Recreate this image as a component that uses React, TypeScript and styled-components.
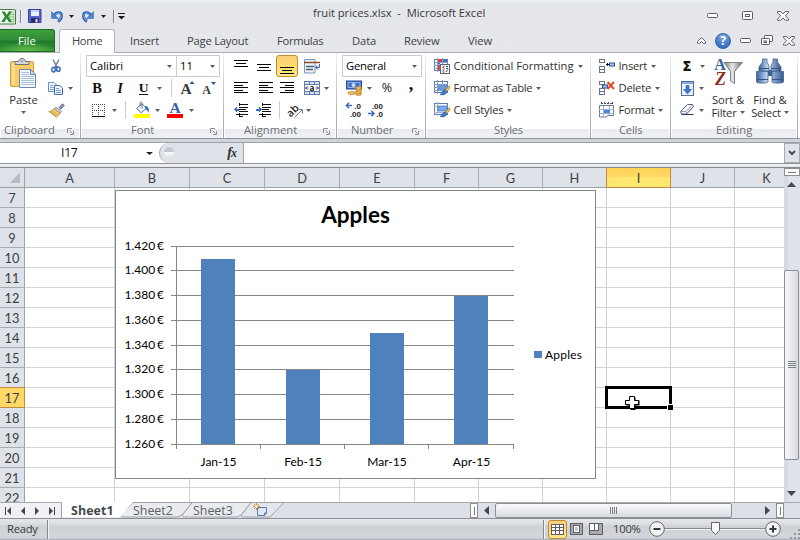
import React from "react";
import styled, { createGlobalStyle, css } from "styled-components";

const UI = `"Open Sans", "Noto Sans", sans-serif`;
const CALIBRI = `Lato, "Open Sans", sans-serif`;

const Global = createGlobalStyle`
  * { box-sizing: border-box; }
  html, body { margin: 0; padding: 0; overflow: hidden; }
  body { font-family: ${UI}; font-size: 11.2px; line-height: 14px; color: #303030; }
  svg { display: block; flex: none; overflow: visible; }
`;

const Window = styled.div`
  width: 800px;
  height: 540px;
  display: flex;
  flex-direction: column;
  background: #e3e5ea;
  overflow: hidden;
`;

const Text = styled.span<{ $ls?: number }>`
  white-space: pre;
  letter-spacing: ${(p) => p.$ls ?? 0}px;
`;

/* ---------- Title bar ---------- */
const TitleBar = styled.div`
  height: 29px;
  flex: none;
  display: grid;
  grid-template-columns: 130px 1fr 100px;
  background: linear-gradient(#e9ecf1 0, #e9ecf1 3px, #e4e6eb 3px, #e4e6eb 100%);
`;
const QuickAccess = styled.div`
  display: flex;
  padding-top: 5px;
`;
const Caption = styled.div`
  padding: 6px 0 0 183px;
  color: #38393c;
`;
const WindowButtons = styled.div`
  display: flex;
  align-items: center;
  padding: 3px 0 0 4px;
`;

/* ---------- Tab strip ---------- */
const TabStrip = styled.div`
  height: 24px;
  flex: none;
  display: flex;
  background: linear-gradient(#e4e6eb, #e6e8ec);
  box-shadow: inset 0 -1px 0 #a9adb5;
`;
const FileTab = styled.div`
  width: 55px;
  height: 23px;
  border: 1px solid #1d6a22;
  border-left: none;
  border-radius: 0 3px 0 0;
  background: radial-gradient(ellipse 28px 9px at 50% 100%, #64bb4c, transparent),
    linear-gradient(#3f9f3c 0, #2f8c34 48%, #1f7a2b 52%, #369836 100%);
  color: #fff;
  padding: 4px 0 0 18px;
  margin-right: 4px;
`;
const Tab = styled.div<{ $w: number; $pl: number; $active?: boolean }>`
  width: ${(p) => p.$w}px;
  padding: 5px 0 0 ${(p) => p.$pl}px;
  color: #404247;
  ${(p) =>
    p.$active &&
    css`
      padding-left: ${p.$pl - 1}px;
      padding-top: 4px;
      background: #fff;
      border: 1px solid #b3b6bd;
      border-bottom: none;
      border-radius: 3px 3px 0 0;
    `}
`;
const DocButtons = styled.div`
  display: flex;
  align-items: center;
  margin-left: auto;
  width: 108px;
  padding-bottom: 1px;
`;

/* ---------- Ribbon ---------- */
const Ribbon = styled.div`
  height: 90px;
  flex: none;
  display: flex;
  background: linear-gradient(#fff 0, #fff 85px, #85878d 85px, #9a9ea5 86px, #d0d3d9 86px, #d0d3d9 89px, #9ea1a8 89px);
  padding-bottom: 5px;
`;
const Group = styled.div<{ $w: number }>`
  width: ${(p) => p.$w}px;
  height: 85px;
  flex: none;
  padding-right: 1px;
  background: linear-gradient(#f4f5f7, #cfd2d8 30%, #a0a4ac) right / 1px 100% no-repeat;
  display: flex;
  flex-direction: column;
`;
const GroupBody = styled.div`
  height: 69px;
  padding-top: 2px;
  display: flex;
`;
const GroupLabel = styled.div<{ $pl: number }>`
  height: 16px;
  margin-right: 1px;
  margin-left: 1px;
  padding: 1px 0 0 ${(p) => p.$pl - 1}px;
  color: #6c6e73;
  display: flex;
  align-items: flex-start;
  justify-content: space-between;
  background: linear-gradient(#fff 7px, #e9ebf0 7px, #eff1f4 100%);
`;
const Launcher = styled.span`
  display: block;
  padding: 5px 5px 0 0;
`;
const Stack = styled.div<{ $pl: number }>`
  display: flex;
  flex-direction: column;
  padding-left: ${(p) => p.$pl}px;
`;
const Row = styled.div`
  height: 22px;
  display: flex;
  align-items: center;
`;
const Slot = styled.div<{ $w: number; $active?: boolean }>`
  width: ${(p) => p.$w}px;
  height: 22px;
  display: flex;
  align-items: center;
  justify-content: center;
  ${(p) =>
    p.$active &&
    css`
      border: 1px solid #c28a30;
      border-radius: 3px;
      background: linear-gradient(#fbd07a, #fddc6b 50%, #ffe88b);
    `}
`;
const Divider = styled.div<{ $w: number }>`
  width: ${(p) => p.$w}px;
  height: 18px;
  background: linear-gradient(#c9ccd2, #c9ccd2) center / 1px 100% no-repeat;
`;
const Combo = styled.div<{ $w: number }>`
  width: ${(p) => p.$w}px;
  height: 22px;
  border: 1px solid #c9ccd3;
  background: #fff;
  color: #000;
  display: flex;
  align-items: center;
  justify-content: space-between;
  padding: 0 4px 0 3px;
  & + & { border-left: none; }
`;
const Command = styled.div`
  height: 22px;
  display: flex;
  align-items: center;
  gap: 4px;
`;
const CommandText = styled(Text)`
  margin-left: -0.5px;
`;
const BigButton = styled.div<{ $w: number }>`
  width: ${(p) => p.$w}px;
  display: flex;
  flex-direction: column;
  align-items: center;
  padding-top: 3px;
`;
const BigIcon = styled.div`
  height: 35px;
`;
const BigLine = styled.div`
  height: 13px;
  display: flex;
  align-items: center;
  gap: 3px;
`;
const Glyph = styled.span<{ $size: number; $italic?: boolean; $underline?: boolean }>`
  font: ${(p) => (p.$italic ? "italic" : "normal")} bold ${(p) => p.$size}px / 16px "Liberation Serif", serif;
  color: #111;
  ${(p) => p.$underline && "border-bottom: 1px solid #111; line-height: 12px;"}
`;
const Percent = styled.span`
  font: 12.5px / 16px ${UI};
  color: #222;
`;
const Comma = styled(Glyph)`
  padding-bottom: 9px;
`;
const Sigma = styled.span`
  font: 800 13.5px / 16px ${UI};
  color: #111;
`;

const Arrow = ({ w = 5, c = "#5c5f66" }: { w?: number; c?: string }) => (
  <svg width={w} height={3} viewBox="0 0 6 3" preserveAspectRatio="none">
    <path d="M0 0h6L3 3z" fill={c} />
  </svg>
);

const LaunchIcon = () => (
  <svg width="7" height="7" viewBox="0 0 7 7" fill="none" stroke="#8d9097">
    <path d="M.5 5V.5H5M2.5 2.5l3 3M6.500 3v3.500H3" />
  </svg>
);

/* ---------- Quick access icons ---------- */
const ExcelIcon = () => (
  <svg width="16" height="17" viewBox="0 0 16 17">
    <path d="M0 1h11l4.500 1v14H0z" fill="#f4faf2" />
    <path d="M0 1.500h12.500l3 .5v14H0" fill="none" stroke="#3f7f3e" />
    <path d="M9.500 4h4.500v10H9.500z" fill="#d8ecd0" stroke="#76a86d" strokeWidth=".6" />
    <path d="M9.500 6.500h4.500M9.500 9h4.500M9.500 11.500h4.500" stroke="#76a86d" strokeWidth=".6" />
    <path d="M1.500 3.500h3.200l2 3.400 2-3.400h3.200L8.400 8.500l3.600 5.400H8.700L6.600 10.300l-2.200 3.600H1.200L4.900 8.500z" fill="#2c8a34" />
  </svg>
);
const SaveIcon = () => (
  <svg width="14" height="14" viewBox="0 0 14 14">
    <path d="M.5.5h12.500v13H.5z" fill="#5a66d0" stroke="#3840a0" />
    <path d="M3 1h8v6H3z" fill="#eaf3fb" />
    <path d="M3 1h8v2H3z" fill="#bcd6ef" />
    <path d="M3 9h8v4.500H3z" fill="#262b62" />
    <path d="M7.500 10h2v3.500h-2z" fill="#dfe5f5" />
  </svg>
);
const UndoIcon = ({ flip }: { flip?: boolean }) => (
  <svg width="13" height="13" viewBox="0 0 13 13">
    <g transform={flip ? "translate(13 0) scale(-1 1)" : undefined}>
      <path d="M3.500 5.500C5 2 10.300 1.500 10.500 5.500c.1 2.500-1.200 4.500-3.500 6" fill="none" stroke="#2f62b5" strokeWidth="2.800" />
      <path d="M4.500 4.800c1.700-2.500 5.400-2.300 5.600.7.1 2-1 4-2.800 5.500" fill="none" stroke="#8db6ec" strokeWidth="1" />
      <path d="M.500 1.500v7h7z" fill="#4a82d2" stroke="#2f62b5" strokeWidth=".5" />
    </g>
  </svg>
);
const CustomizeIcon = () => (
  <svg width="7" height="7" viewBox="0 0 7 7">
    <path d="M0 .5h7" stroke="#1e1e1e" />
    <path d="M0 3h7L3.500 6.500z" fill="#1e1e1e" />
  </svg>
);
const QSep = () => (
  <svg width="2" height="13" viewBox="0 0 2 13">
    <path d="M.5 0v13" stroke="#7d8087" />
    <path d="M1.500 0v13" stroke="#f4f5f8" />
  </svg>
);

/* ---------- Window buttons ---------- */
const MinIcon = () => (
  <svg width="11" height="6" viewBox="0 0 11 6">
    <rect x=".5" y=".5" width="10" height="4" rx="1" fill="#fff" stroke="#5a5e6b" />
  </svg>
);
const MaxIcon = () => (
  <svg width="11" height="10" viewBox="0 0 11 10">
    <rect x=".5" y=".5" width="10" height="8" rx="1" fill="#fff" stroke="#5a5e6b" />
    <rect x="3.500" y="3.500" width="4" height="2" fill="#fff" stroke="#5a5e6b" />
  </svg>
);
const RestoreIcon = () => (
  <svg width="12" height="11" viewBox="0 0 12 11" fill="#fff" stroke="#5a5e6b">
    <rect x="3.500" y=".5" width="8" height="6" rx=".6" />
    <rect x=".5" y="3.500" width="8" height="6" rx=".6" />
    <rect x="3" y="6" width="2.500" height="1.500" />
  </svg>
);
const CloseIcon = () => (
  <svg width="12" height="10" viewBox="0 0 12 10">
    <path d="M.5.5h3.300L6 2.900 8.200.5h3.300v1.300L8.300 4.800l3.200 3.100v1.300H8.200L6 6.800 3.800 9.200H.5V7.900l3.200-3.100L.5 1.800z" fill="#fff" stroke="#5a5e6b" />
  </svg>
);
const CollapseIcon = () => (
  <svg width="9" height="7" viewBox="0 0 9 7">
    <path d="M4.500.7L8.500 4.500v1.800H6.300L4.500 4.600 2.700 6.300H.5V4.500z" fill="#fff" stroke="#5a5e6b" />
  </svg>
);
const Help = styled.div`
  width: 16px;
  height: 16px;
  border-radius: 50%;
  border: 1px solid #2f5fa8;
  background: radial-gradient(circle at 50% 20%, #7fa9e2, #3a6fc0 75%);
  color: #fff;
  font: bold 12px / 14px "Open Sans", sans-serif;
  text-align: center;
`;

/* ---------- Ribbon icons ---------- */
const PasteIcon = () => (
  <svg width="27" height="31" viewBox="0 0 27 31">
    <rect x=".5" y="3.500" width="23" height="25" rx="1.500" fill="#f6cc63" stroke="#d29c3c" />
    <path d="M2 5h3v22H2z" fill="#fbdc8b" />
    <path d="M5 3.500h3.500C9 1 10.500.5 12 .5s3 .5 3.500 3H19v3H5z" fill="#d5d7da" stroke="#6f7277" />
    <circle cx="12" cy="3" r="1" fill="#fff" stroke="#6f7277" strokeWidth=".6" />
    <path d="M9.500 11.500h11l5 5v13h-16z" fill="#f5f9ff" stroke="#6c87b5" />
    <path d="M20.500 11.500v5h5z" fill="#cddcf1" stroke="#6c87b5" />
    <path d="M11 14.500h8M11 16.500h8M11 18.500h13M11 20.500h13M11 22.500h13M11 24.500h13M11 26.500h13" stroke="#a9c0e2" />
  </svg>
);
const CutIcon = () => (
  <svg width="10" height="14" viewBox="0 0 10 14" fill="none">
    <path d="M2 .5L6 8M8 .5L4 8" stroke="#6f7f99" strokeWidth="1.500" />
    <ellipse cx="2.500" cy="10.800" rx="1.700" ry="2.200" stroke="#3b67b3" strokeWidth="1.500" />
    <ellipse cx="7.300" cy="10.300" rx="1.700" ry="2.200" stroke="#3b67b3" strokeWidth="1.500" />
    <path d="M3.500 8.200h3" stroke="#3b67b3" strokeWidth="1.500" />
  </svg>
);
const CopyIcon = () => (
  <svg width="15" height="13" viewBox="0 0 15 13">
    <path d="M.5.5h5.500l2.500 2.500v6.500H.5z" fill="#eef5ff" stroke="#6b8cc4" />
    <path d="M2 3.500h3M2 5.500h4M2 7.500h4" stroke="#84a6db" />
    <path d="M6.500 3.500h5l3 2.500v6.500h-8z" fill="#eef5ff" stroke="#4669aa" />
    <path d="M8 6.500h3M8 8.500h5M8 10.500h5" stroke="#6f97d5" />
  </svg>
);
const BrushIcon = () => (
  <svg width="17" height="15" viewBox="0 0 17 15">
    <path d="M11 4.500L14.500.8l1.800 1.500-3.500 4z" fill="#8f96b5" stroke="#565d80" strokeWidth=".8" />
    <path d="M8 4l5.500 4.500-1.800 2.200L6 6z" fill="#c4c8d6" stroke="#6f7590" strokeWidth=".7" />
    <path d="M6 5.500l6 5-3.500 3.800L.7 8.500c2 0 4-1 5.300-3z" fill="#f6cf6c" stroke="#b98a37" strokeWidth=".8" />
    <path d="M4 8l5.500 4M3 9l5 4" stroke="#c4903a" strokeWidth=".7" />
  </svg>
);
const BordersIcon = () => (
  <svg width="13" height="13" viewBox="0 0 13 13">
    <path d="M.5 0v12M6.500 0v12M12.500 0v12M0 .5h13M0 6.500h13" stroke="#4a4a4a" strokeDasharray="1 1" fill="none" />
    <path d="M0 12.500h13" stroke="#111" />
  </svg>
);
const FillIcon = () => (
  <svg width="16" height="16" viewBox="0 0 16 16">
    <path d="M0 12h16v4H0z" fill="#ffff00" />
    <path d="M2.500 6.500L8 1.800l4.500 4.400-5.300 4.600z" fill="#eef2f8" stroke="#5b6f92" />
    <path d="M8 6.500V1c0-1.200-2-1.200-2 0v3" fill="none" stroke="#5b6f92" strokeWidth=".9" />
    <path d="M11 4c3 0 4.500 2 3.600 7-1-2.500-1.600-3.200-3-3.600z" fill="#3a6cc0" />
  </svg>
);
const FontColorIcon = () => (
  <svg width="16" height="16" viewBox="0 0 16 16">
    <path d="M0 12h16v4H0z" fill="#ff0000" />
    <text x="8" y="10.800" textAnchor="middle" fontFamily="Liberation Serif, serif" fontWeight="700" fontSize="15.500" fill="#365fa5">A</text>
  </svg>
);
const GrowIcon = ({ down }: { down?: boolean }) => (
  <svg width="16" height="16" viewBox="0 0 16 16">
    <text x={down ? 4.5 : 6} y="14" textAnchor="middle" fontFamily="Liberation Serif, serif" fontWeight="700" fontSize={down ? 12 : 15.5} fill="#3b3b3b">A</text>
    <path d={down ? "M9 2h5l-2.500 3z" : "M9.500 4h5L12 1z"} fill="#2c57a5" />
  </svg>
);
const Lines = ({ kind }: { kind: "top" | "mid" | "bot" | "left" | "center" | "right" }) => {
  const three = kind === "top" || kind === "mid" || kind === "bot";
  const y0 = kind === "mid" ? 4 : kind === "bot" ? 7 : 0;
  const rows = three
    ? [[0, 14, y0], [2, 10, y0 + 3], [0, 14, y0 + 6]]
    : [0, 1, 2, 3, 4].map((i) => {
        const w = i % 2 ? 9 : 14;
        return [kind === "left" ? 0 : kind === "right" ? 14 - w : 2.5, w, i * 2.5];
      });
  return (
    <svg width="14" height="14" viewBox="0 0 14 14" shapeRendering="crispEdges">
      {rows.map(([x, w, y], i) => (
        <rect key={i} x={Math.floor(x)} y={Math.round(y) + 1} width={w} height="1" fill="#000" />
      ))}
    </svg>
  );
};
const IndentIcon = ({ out }: { out?: boolean }) => (
  <svg width="16" height="14" viewBox="0 0 16 14" shapeRendering="crispEdges">
    <path d="M6 1.500h9M7 4.500h8M7 6.500h6M7 8.500h8M3 11.500h12M6 13.500h4" stroke="#111" />
    <path d="M6.500 0v14" stroke="#111" strokeDasharray="1 1" />
    <path d={out ? "M4 3L.5 6.500 4 10V7.500h2v-2H4z" : "M2.500 3L6 6.500 2.500 10V7.500H0v-2h2.500z"} fill="#3a6cc8" />
  </svg>
);
const WrapIcon = () => (
  <svg width="17" height="15" viewBox="0 0 17 15">
    <path d="M.5.5h10.500v13.500H.5z" fill="#eaf0f8" stroke="#7f97bb" />
    <path d="M0 3.500h16" stroke="#8a4b1f" strokeWidth="1.400" />
    <path d="M2 7.500h8M2 10.500h7" stroke="#555f70" strokeWidth="1.400" />
    <path d="M15.500 5v3.500H13" stroke="#3a6cb8" fill="none" />
    <path d="M13.500 6v5L11 8.500z" fill="#3a6cb8" />
  </svg>
);
const MergeIcon = () => (
  <svg width="16" height="14" viewBox="0 0 16 14">
    <rect x=".5" y=".5" width="15" height="13" fill="#d5e1f3" stroke="#5f7ba6" />
    <path d="M5.500 0v3M10.500 0v3M5.500 11v3M10.500 11v3M0 3.500h16M0 10.500h16" stroke="#5f7ba6" />
    <rect x="1" y="4" width="14" height="6" fill="#fff" />
    <text x="8" y="9.500" textAnchor="middle" fontFamily="Open Sans, sans-serif" fontWeight="700" fontSize="8" fill="#111">a</text>
    <path d="M1.500 7h3M3.500 5.500L1.500 7l2 1.500M14.500 7h-3M12.500 5.500L14.500 7l-2 1.500" stroke="#2f4f87" fill="none" strokeWidth=".9" />
  </svg>
);
const OrientIcon = () => (
  <svg width="17" height="15" viewBox="0 0 17 15">
    <text x="0" y="12" transform="rotate(-45 5 9)" fontFamily="Open Sans, sans-serif" fontSize="10.500" fontWeight="600" fill="#1d1d1d">ab</text>
    <path d="M7.500 14.500L15 7M11.500 6.500H15.500v4" stroke="#7b828f" fill="none" />
  </svg>
);
const CurrencyIcon = () => (
  <svg width="17" height="16" viewBox="0 0 17 16">
    <rect x=".5" y="1" width="15" height="8" fill="#4571c4" stroke="#2b4e99" />
    <path d="M2 2.500h12v5H2z" fill="none" stroke="#a5c1ec" strokeWidth=".8" />
    <circle cx="7.500" cy="5" r="2" fill="#c9dbf6" />
    <g fill="#f5c75a" stroke="#a8731c" strokeWidth=".7">
      <ellipse cx="12.500" cy="14" rx="3" ry="1.400" /><ellipse cx="12.500" cy="12" rx="3" ry="1.400" />
      <ellipse cx="12.500" cy="10" rx="3" ry="1.400" /><ellipse cx="12.500" cy="8" rx="3" ry="1.400" />
      <ellipse cx="5.500" cy="13" rx="3.500" ry="1.500" />
    </g>
  </svg>
);
const DecimalIcon = ({ inc }: { inc?: boolean }) => (
  <svg width="17" height="16" viewBox="0 0 17 16">
    <g fontFamily="Liberation Sans, sans-serif" fontWeight="700" fontSize="8" fill="#222" textAnchor="end">
      <text x="15" y="6.500">{inc ? ".0" : ".00"}</text>
      <text x="15" y="14.500">{inc ? ".00" : ".0"}</text>
    </g>
    {inc ? (
      <path d="M0 3.500h6M3 .8L.4 3.500 3 6.200" stroke="#3a6cc8" strokeWidth="1.500" fill="none" />
    ) : (
      <path d="M0 11.500h6M3.300 8.800L6 11.500l-2.700 2.700" stroke="#3a6cc8" strokeWidth="1.500" fill="none" />
    )}
  </svg>
);
const TableBase = () => (
  <>
    <rect x=".5" y="1.500" width="13" height="11" fill="#fff" stroke="#5b7db3" />
    <path d="M0 4.500h14M0 7.500h14M0 10.500h14M3.500 0v14M8.500 0v14" stroke="#7b9bc9" />
  </>
);
const CondIcon = () => (
  <svg width="16" height="16" viewBox="0 0 16 16">
    <TableBase />
    <path d="M4 1h4v3H4zM4 7h3v5H4z" fill="#e0442e" />
    <path d="M9 1h4v3H9z" fill="#4472c4" />
    <path d="M4 4.500h2v2H4z" fill="#4472c4" />
    <rect x="6.500" y="6.500" width="9" height="9" fill="#fff" stroke="#5b6578" />
    <path d="M10.500 8l-2 1.200 2 1.200M8.500 12h2M8.500 14h2M12 8.500h2M12 10.500h2M12 14l2-2.500" stroke="#333" fill="none" strokeWidth=".9" />
  </svg>
);
const PaintBrush = () => (
  <>
    <path d="M15.500 5.500l-4.500 5 1.500 1.300L16 8z" fill="#f0c050" stroke="#a87522" strokeWidth=".6" />
    <path d="M11 10c-2.500 0-2.500 3-5 4.500 3.500 1 6.500 0 6.800-3z" fill="#3f78ce" stroke="#23519c" strokeWidth=".6" />
  </>
);
const TableIcon = () => (
  <svg width="16" height="16" viewBox="0 0 16 16">
    <TableBase />
    <path d="M4 5h4v2H4zM9 5h4v2H9zM4 8h4v2H4zM9 8h4v2H9z" fill="#5e94e0" />
    <PaintBrush />
  </svg>
);
const StylesIcon = () => (
  <svg width="16" height="16" viewBox="0 0 16 16">
    <rect x=".5" y="1.500" width="13" height="11" fill="#fff" stroke="#5b7db3" />
    <path d="M0 4.500h14M0 10.500h14M3.500 0v14" stroke="#9db5d9" />
    <path d="M4 4h9v5H4z" fill="#78aaf0" stroke="#3a6cc0" strokeWidth=".7" />
    <PaintBrush />
  </svg>
);
const InsertIcon = () => (
  <svg width="16" height="14" viewBox="0 0 16 14">
    <g fill="#fff" stroke="#66738f">
      <rect x=".5" y=".5" width="5" height="3" /><rect x=".5" y="7.500" width="5" height="3" /><rect x=".5" y="10.500" width="5" height="3" />
      <rect x="10.500" y="4" width="5" height="3" fill="#a9c5ee" stroke="#2b4e99" />
    </g>
    <path d="M7 5.500h3M8.500 4v3" stroke="#111" />
  </svg>
);
const DeleteIcon = () => (
  <svg width="16" height="14" viewBox="0 0 16 14">
    <g fill="#fff" stroke="#66738f">
      <rect x=".5" y=".5" width="5" height="3" /><rect x="3.500" y="4" width="5" height="3" fill="#a9c5ee" stroke="#2b4e99" />
      <rect x=".5" y="7.500" width="5" height="3" /><rect x=".5" y="10.500" width="5" height="3" />
    </g>
    <path d="M8.500 1l6.500 7M15 1L8.500 8" stroke="#e2492a" strokeWidth="2" />
  </svg>
);
const FormatIcon = () => (
  <svg width="16" height="16" viewBox="0 0 16 16">
    <path d="M2 1.500h12M2.500 0v3M13.500 0v3M5.500 0v3M9.500 0v3" stroke="#35507f" strokeDasharray="2 1" />
    <path d="M.5 3.500h14v10H9l-2 1.500H.5z" fill="#fff" stroke="#66789b" />
    <path d="M0 7.500h15M0 11.500h15M4.500 4v11M10.500 4v9.500" stroke="#9fb3d4" />
    <path d="M5 8h6v3H5z" fill="#4f83d6" />
  </svg>
);
const FillDownIcon = () => (
  <svg width="13" height="15" viewBox="0 0 13 15">
    <rect x=".5" y=".5" width="12" height="14" fill="#eaf1fb" stroke="#4b6ea8" />
    <path d="M1 1h11v2H1z" fill="#8cabda" />
    <path d="M5 4.500h3v4h2.500l-4 4.500-4-4.500H5z" fill="#3b76d3" stroke="#234f9c" strokeWidth=".5" />
  </svg>
);
const EraserIcon = () => (
  <svg width="14" height="12" viewBox="0 0 14 12">
    <path d="M7.500.5h5l1 2-7 7.500H1.500L.5 7.500z" fill="#fff" stroke="#4c5c82" />
    <path d="M.5 7.500H6L12.500.5M6 7.500L7 10" stroke="#8d9ab8" fill="none" />
    <path d="M1.500 10.500h12" stroke="#333c55" />
  </svg>
);
const SortIcon = () => (
  <svg width="29" height="28" viewBox="0 0 29 28">
    <defs>
      <linearGradient id="fun" x1="0" x2="1"><stop offset="0" stopColor="#777" /><stop offset=".45" stopColor="#e8e8e8" /><stop offset="1" stopColor="#6e6e6e" /></linearGradient>
    </defs>
    <path d="M10 4.500h18.500L20.500 13.500v12l-4-2.500v-9.500z" fill="url(#fun)" stroke="#6a6a6a" strokeWidth=".8" />
    <text x="6" y="12" textAnchor="middle" fontFamily="Liberation Serif, serif" fontWeight="700" fontSize="16" fill="#34609f">A</text>
    <text x="6.500" y="27" textAnchor="middle" fontFamily="Liberation Serif, serif" fontStyle="italic" fontWeight="700" fontSize="18" fill="#8c2f22">Z</text>
  </svg>
);
const FindIcon = () => (
  <svg width="28" height="26" viewBox="0 0 28 26">
    <defs>
      <linearGradient id="bin" x1="0" x2="1"><stop offset="0" stopColor="#3c629b" /><stop offset=".4" stopColor="#c5d8f1" /><stop offset="1" stopColor="#34588f" /></linearGradient>
    </defs>
    <path d="M11 12h6v6h-6z" fill="#3f6196" />
    <g fill="url(#bin)" stroke="#35568a" strokeWidth=".7">
      <path d="M6.500 1H11v3L13 8v5H3V9l3.500-5zM17 1h4.500v3L25 9v4H15V8l2-4z" />
      <path d="M.5 13.500h11.500v10.500c0 1.500-11.500 1.500-11.500 0zM16 13.500h11.500v10.500c0 1.500-11.500 1.500-11.500 0z" />
    </g>
    <path d="M3 10.500h10M15 10.500h10M1 21.500h11M16 21.500h11" stroke="#35568a" />
  </svg>
);

/* ---------- Formula bar ---------- */
const FormulaBar = styled.div`
  height: 25px;
  flex: none;
  display: flex;
  border-bottom: 1px solid #84868c;
  background: linear-gradient(#fff 0, #fff 20px, #8f939a 20px, #8f939a 21px, #f2f3f6 21px, #e3e6ec 100%);
`;
const NameBox = styled.div`
  width: 159px;
  height: 20px;
  display: flex;
  align-items: center;
  padding-left: 61px;
  font-size: 12.3px;
  color: #111;
`;
const NameArrow = styled.span`
  margin-left: auto;
  padding-right: 6px;
`;
const FxArea = styled.div`
  width: 85px;
  height: 20px;
  background: #dfe2e9;
  border: 1px solid #a3a7af;
  border-width: 0 1px 0 1px;
  border-radius: 11px 0 0 11px;
  display: flex;
  align-items: center;
  justify-content: space-between;
  padding: 0 6px 0 4px;
`;
const Knob = styled.span`
  width: 10px;
  height: 10px;
  border-radius: 50%;
  background: linear-gradient(#c4c8d0 50%, #f7f8fa 50%, #e8eaef);
  margin-bottom: 2px;
`;
const Fx = styled.span`
  font: italic bold 14px / 16px "Liberation Serif", serif;
  color: #333;
  small { font-size: 12px; margin-left: -1px; }
`;
const FormulaInput = styled.div`
  flex: 1;
`;
const Expand = styled.div`
  width: 16px;
  height: 20px;
  border: 1px solid #a8abb2;
  background: #dfe2e9;
  display: grid;
  place-items: center;
`;

/* ---------- Sheet ---------- */
const Main = styled.div`
  height: 334px;
  flex: none;
  display: flex;
`;
const Sheet = styled.div`
  width: 784px;
  position: relative;
  overflow: hidden;
  background: #fff;
`;
const HeaderRow = styled.div`
  display: flex;
  height: 20px;
`;
const headFont = css`
  font: 12.8px / 21px ${CALIBRI};
  color: #3c3e42;
  text-align: center;
`;
const Corner = styled.div`
  width: 25px;
  flex: none;
  background: linear-gradient(135deg, transparent 50%, #b9bcc4 50%) 9px 4px / 11px 11px no-repeat, #dfe2e9;
  border-right: 1px solid #9ea2aa;
  border-bottom: 1px solid #9ea2aa;
`;
const ColHead = styled.div<{ $w: number; $sel?: boolean }>`
  ${headFont}
  width: ${(p) => p.$w}px;
  flex: none;
  background: #dfe2e9;
  border-right: 1px solid #a7abb2;
  border-bottom: 1px solid #9ea2aa;
  ${(p) =>
    p.$sel &&
    css`
      background: linear-gradient(#ffd257 0, #ffd966 9px, #ffe76f 9px);
      border-color: #c58a3b;
      box-shadow: -1px 0 0 #c58a3b;
    `}
`;
const GridRow = styled.div`
  display: flex;
  height: 20px;
`;
const RowHead = styled.div<{ $sel?: boolean }>`
  ${headFont}
  width: 25px;
  flex: none;
  background: ${(p) => (p.$sel ? "#ffd966" : "#dfe2e9")};
  border-right: 1px solid ${(p) => (p.$sel ? "#c58a3b" : "#9ea2aa")};
  border-bottom: 1px solid ${(p) => (p.$sel ? "#c58a3b" : "#a7abb2")};
  box-shadow: ${(p) => (p.$sel ? "0 -1px 0 #c58a3b" : "none")};
`;
const Cell = styled.div<{ $w: number }>`
  width: ${(p) => p.$w}px;
  flex: none;
  border-right: 1px solid #d0d3d8;
  border-bottom: 1px solid #d0d3d8;
`;
const ChartObject = styled.div`
  position: absolute;
  left: 115px;
  top: 22px;
  width: 481px;
  height: 289px;
  background: #fff;
  border: 1px solid #868686;
`;
const Selection = styled.div`
  position: absolute;
  left: 605px;
  top: 218px;
  width: 67px;
  height: 23px;
  border: 3px solid #000;
  &::after {
    content: "";
    position: absolute;
    right: -4px;
    bottom: -4px;
    width: 5px;
    height: 5px;
    background: #000;
    box-shadow: -1px -1px 0 #fff;
  }
`;
const Pointer = styled.div`
  position: absolute;
  left: 625px;
  top: 228px;
`;

const COLS: [string, number][] = [
  ["A", 90], ["B", 75], ["C", 75], ["D", 75], ["E", 75], ["F", 64], ["G", 64], ["H", 64], ["I", 64], ["J", 64], ["K", 64],
];
const ROWS = Array.from({ length: 16 }, (_, i) => i + 7);

const BARS: [string, number][] = [["Jan-15", 1410], ["Feb-15", 1320], ["Mar-15", 1350], ["Apr-15", 1380]];
const TICKS = [1420, 1400, 1380, 1360, 1340, 1320, 1300, 1280, 1260];
const yOf = (v: number) => 253 - ((v - 1260) / 160) * 198;

const Chart = () => (
  <svg width="479" height="287" viewBox="0 0 479 287" fontFamily={CALIBRI} fontSize="12" fill="#000">
    <text x="239.500" y="32" textAnchor="middle" fontWeight="700" fontSize="22.500">Apples</text>
    <g shapeRendering="crispEdges">
      {TICKS.map((t) => (
        <rect key={t} x="55" y={Math.floor(yOf(t))} width="343" height="1" fill="#868686" />
      ))}
      <rect x="60" y="55" width="1" height="203" fill="#868686" />
      {[144, 228, 312, 397].map((x) => (
        <rect key={x} x={x} y="253" width="1" height="5" fill="#868686" />
      ))}
      {BARS.map(([n, v], i) => (
        <rect key={n} x={[85, 170, 254, 338][i]} y={Math.ceil(yOf(v))} width="34" height={253 - Math.ceil(yOf(v))} fill="#4f81bd" />
      ))}
      <rect x="418" y="160" width="8" height="7" fill="#4f81bd" />
    </g>
    {TICKS.map((t) => (
      <text key={t} x="48" y={Math.floor(yOf(t)) + 4} textAnchor="end" wordSpacing="-1.200">
        {`${(t / 1000).toFixed(3)} €`}
      </text>
    ))}
    {BARS.map(([n], i) => (
      <text key={n} x={[102.5, 187, 271, 355.5][i]} y="275" textAnchor="middle">{n}</text>
    ))}
    <text x="429" y="168" textLength="37">Apples</text>
  </svg>
);

const CrossIcon = () => (
  <svg width="15" height="15" viewBox="0 0 15 15">
    <path d="M5.500 1.500h5v3h4v5h-4v4.500h-5v-4.500H1.500v-5h4z" fill="#000" />
    <path d="M4.500.5h5v4h4v4h-4v4h-5v-4h-4v-4h4z" fill="#fff" stroke="#000" />
  </svg>
);

/* ---------- Scrollbars ---------- */
const VScroll = styled.div`
  width: 16px;
  display: flex;
  flex-direction: column;
  align-items: center;
  background: linear-gradient(90deg, #d5d9e1 4px, #dfe2e9 4px);
`;
const VSplit = styled.div`
  width: 16px;
  height: 8px;
  border: 1px solid #8a8d94;
  background: linear-gradient(#777, #777) center / 8px 1px no-repeat, #fff;
`;
const VArrowBox = styled.div<{ $h: number; $pt: number }>`
  height: ${(p) => p.$h}px;
  padding: ${(p) => p.$pt}px 1px 0 0;
`;
const VThumb = styled.div`
  width: 15px;
  align-self: flex-start;
  height: 190px;
  border: 1px solid #8b8f97;
  border-radius: 2px;
  background: linear-gradient(90deg, #f6f7f9, #e8eaee 50%, #d4d7dd);
  display: grid;
  place-items: center;
`;

const BottomBar = styled.div`
  height: 17px;
  flex: none;
  display: flex;
  background: #dde0e8;
  border-top: 1px solid #a8abb2;
  border-bottom: 1px solid #8b8e95;
`;
const NavButtons = styled.div`
  width: 62px;
  display: flex;
  align-items: center;
  padding-left: 4px;
  gap: 7px;
  background: #f0f1f4;
  border-right: 1px solid #a0a3aa;
`;
const TabRow = styled.div`
  position: relative;
  width: 408px;
  margin-top: -1px;
`;
const TabLabels = styled.div`
  position: absolute;
  inset: 0;
  display: flex;
  align-items: center;
  font-size: 12.4px;
  color: #5c5e63;
  padding: 1px 0 0 9px;
`;
const SheetName = styled.span<{ $w: number; $bold?: boolean }>`
  width: ${(p) => p.$w}px;
  font-weight: ${(p) => (p.$bold ? 700 : 400)};
  color: ${(p) => (p.$bold ? "#46484c" : "inherit")};
  letter-spacing: ${(p) => (p.$bold ? 0.1 : 0)}px;
`;
const HSplit = styled.div`
  width: 8px;
  border: 1px solid #8a8d94;
  background: linear-gradient(#777, #777) center / 1px 8px no-repeat, #fff;
`;
const HArrow = styled.div<{ $w: number }>`
  width: ${(p) => p.$w}px;
  display: grid;
  place-items: center;
`;
const HThumb = styled.div`
  width: 237px;
  border: 1px solid #8b8f97;
  border-radius: 2px;
  background: linear-gradient(#f8f9fb, #e9ebee 50%, #d6d9df);
  display: grid;
  place-items: center;
`;
const Spacer = styled.div`
  flex: 1;
`;

/* ---------- Status bar ---------- */
const StatusBar = styled.div`
  height: 21px;
  flex: none;
  display: flex;
  align-items: center;
  background: linear-gradient(#e5e7eb 0, #d7dade 6px, #cdd0d5 7px, #d3d6da 19px, #b4b7bd 20px);
  color: #3a3b3e;
  padding: 0 0 1px 7px;
`;
const StatusSep = styled.div`
  width: 2px;
  height: 19px;
  background: linear-gradient(90deg, #85888f 50%, #f2f3f5 50%);
`;
const ViewButton = styled.div<{ $active?: boolean }>`
  width: 19px;
  height: 19px;
  display: grid;
  place-items: center;
  ${(p) =>
    p.$active &&
    css`
      border: 1px solid #c28a30;
      border-radius: 3px;
      background: linear-gradient(#fbd07a, #ffe78a);
    `}
`;
const Views = styled.div`
  display: flex;
  margin-left: 3px;
`;
const ZoomText = styled.span`
  width: 35px;
  margin-left: 8px;
  letter-spacing: -0.2px;
`;

const ViewGrid = () => (
  <svg width="13" height="11" viewBox="0 0 13 11"><rect x=".5" y=".5" width="12" height="10" fill="#fff" stroke="#5d5e62" /><path d="M4.500 0v11M8.500 0v11M0 3.500h13M0 6.500h13" stroke="#5d5e62" /></svg>
);
const ViewPage = () => (
  <svg width="13" height="12" viewBox="0 0 13 12"><rect x=".5" y=".5" width="12" height="11" fill="#a8abb1" stroke="#5d5e62" /><rect x="3.500" y="2.500" width="6" height="7" fill="#fff" stroke="#5d5e62" /><path d="M5 5h3M5 7h3" stroke="#999" /></svg>
);
const ViewBreak = () => (
  <svg width="14" height="12" viewBox="0 0 14 12"><rect x=".5" y=".5" width="13" height="11" fill="#a8abb1" stroke="#5d5e62" /><path d="M1 1h4v6H1zM6 1h4v6H6z" fill="#fff" /><path d="M5.500 0v7M9.500 0v7.500H0" stroke="#5d5e62" fill="none" /></svg>
);
const ZoomSlider = () => (
  <svg width="152" height="20" viewBox="0 0 152 20">
    <path d="M16 9.500h101" stroke="#85888e" />
    <path d="M16 10.500h101" stroke="#f1f2f4" />
    <circle cx="9" cy="10" r="7.300" fill="#f2f3f5" stroke="#63656b" />
    <path d="M5.500 10h7" stroke="#37383b" strokeWidth="2" />
    <circle cx="125" cy="10" r="7.300" fill="#f2f3f5" stroke="#63656b" />
    <path d="M121.500 10h7M125 6.500v7" stroke="#37383b" strokeWidth="2" />
    <path d="M63.500 3.500h8v8l-4 4-4-4z" fill="#f7f8f9" stroke="#63656b" />
    <path d="M150 10h2v2h-2zM146 14h2v2h-2zM150 14h2v2h-2zM142 18h2v2h-2zM146 18h2v2h-2zM150 18h2v2h-2z" fill="#96999f" />
  </svg>
);
const SheetTabsShape = () => (
  <svg width="408" height="16" viewBox="0 0 408 16">
    <path d="M0 .5h408" stroke="#a8abb2" />
    <g fill="#e9ebf0" stroke="#999ca3" strokeWidth=".9">
      <path d="M222 .5L208 15h-26q-4 0-2-3l9-11.500z" fill="#e3e6ec" />
      <path d="M189 .5l-9 11.500q-3 3-7 3h-48q-6 0-4-3l9-11.500z" />
      <path d="M130 .5l-9 11.500q-3 3-7 3H63q-6 0-3-3L71 .5z" />
    </g>
    <path d="M0 0h71l-11 13q-2 2.500-4 2.500H0z" fill="#fff" />
    <path d="M195.500 5.500h9v5.500l-2 2.500h-7z" fill="#dfe9f8" stroke="#5879ad" />
    <path d="M204.500 11h-2v2.500" fill="none" stroke="#5879ad" />
    <path d="M194.500 1v7M191 4.500h7M192 2l5 5M197 2l-5 5" stroke="#e08a1e" />
    <circle cx="194.500" cy="4.500" r="1.300" fill="#fff" />
  </svg>
);
const Tri = ({ d }: { d: string }) => (
  <svg width="8" height="8" viewBox="0 0 8 8"><path d={d} fill="#44474e" /></svg>
);

export default function App() {
  return (
    <>
      <Global />
      <Window>
        <TitleBar>
          <QuickAccess>
            <Slot $w={16}><ExcelIcon /></Slot>
            <Slot $w={9}><QSep /></Slot>
            <Slot $w={20}><SaveIcon /></Slot>
            <Slot $w={24}><UndoIcon /></Slot>
            <Slot $w={5}><Arrow c="#222" /></Slot>
            <Slot $w={27}><UndoIcon flip /></Slot>
            <Slot $w={5}><Arrow c="#222" /></Slot>
            <Slot $w={15}><QSep /></Slot>
            <Slot $w={1}><CustomizeIcon /></Slot>
          </QuickAccess>
          <Caption><Text $ls={-0.02}>{"fruit prices.xlsx  -  Microsoft Excel"}</Text></Caption>
          <WindowButtons>
            <Slot $w={17}><MinIcon /></Slot>
            <Slot $w={53}><MaxIcon /></Slot>
            <Slot $w={17}><CloseIcon /></Slot>
          </WindowButtons>
        </TitleBar>

        <TabStrip>
          <FileTab><Text>File</Text></FileTab>
          <Tab $w={56} $pl={13} $active><Text $ls={-0.4}>Home</Text></Tab>
          <Tab $w={58} $pl={15}><Text $ls={-0.2}>Insert</Text></Tab>
          <Tab $w={90} $pl={14}><Text $ls={-0.2}>Page Layout</Text></Tab>
          <Tab $w={75} $pl={14}><Text $ls={-0.3}>Formulas</Text></Tab>
          <Tab $w={52} $pl={14}><Text $ls={-0.1}>Data</Text></Tab>
          <Tab $w={64} $pl={14}><Text $ls={-0.2}>Review</Text></Tab>
          <Tab $w={60} $pl={14}><Text $ls={-0.1}>View</Text></Tab>
          <DocButtons>
            <Slot $w={19}><CollapseIcon /></Slot>
            <Slot $w={24}><Help>?</Help></Slot>
            <Slot $w={21}><MinIcon /></Slot>
            <Slot $w={22}><RestoreIcon /></Slot>
            <Slot $w={22}><CloseIcon /></Slot>
          </DocButtons>
        </TabStrip>

        <Ribbon>
          <Group $w={81}>
            <GroupBody>
              <BigButton $w={47}>
                <BigIcon><PasteIcon /></BigIcon>
                <BigLine><Text>Paste</Text></BigLine>
                <BigLine><Arrow /></BigLine>
              </BigButton>
              <Stack $pl={0}>
                <Row><Slot $w={17}><CutIcon /></Slot></Row>
                <Row><Slot $w={17}><CopyIcon /></Slot><Slot $w={13}><Arrow /></Slot></Row>
                <Row><Slot $w={18}><BrushIcon /></Slot></Row>
              </Stack>
            </GroupBody>
            <GroupLabel $pl={4}><Text>Clipboard</Text><Launcher><LaunchIcon /></Launcher></GroupLabel>
          </Group>

          <Group $w={143}>
            <GroupBody>
              <Stack $pl={5}>
                <Row><Combo $w={91}><Text>Calibri</Text><Arrow /></Combo><Combo $w={43}><Text>11</Text><Arrow /></Combo></Row>
                <Row>
                  <Slot $w={22}><Glyph $size={14.5}>B</Glyph></Slot>
                  <Slot $w={24}><Glyph $size={14.5} $italic>I</Glyph></Slot>
                  <Slot $w={23}><Glyph $size={13.5} $underline>U</Glyph></Slot>
                  <Slot $w={9}><Arrow /></Slot>
                  <Divider $w={14} />
                  <Slot $w={20}><GrowIcon /></Slot>
                  <Slot $w={24}><GrowIcon down /></Slot>
                </Row>
                <Row>
                  <Slot $w={24}><BordersIcon /></Slot>
                  <Slot $w={8}><Arrow /></Slot>
                  <Divider $w={14} />
                  <Slot $w={20}><FillIcon /></Slot>
                  <Slot $w={10}><Arrow /></Slot>
                  <Slot $w={26}><FontColorIcon /></Slot>
                  <Slot $w={6}><Arrow /></Slot>
                </Row>
              </Stack>
            </GroupBody>
            <GroupLabel $pl={50}><Text>Font</Text><Launcher><LaunchIcon /></Launcher></GroupLabel>
          </Group>

          <Group $w={113}>
            <GroupBody>
              <Stack $pl={6}>
                <Row>
                  <Slot $w={22}><Lines kind="top" /></Slot>
                  <Slot $w={24}><Lines kind="mid" /></Slot>
                  <Slot $w={22} $active><Lines kind="bot" /></Slot>
                  <Slot $w={29}><WrapIcon /></Slot>
                </Row>
                <Row>
                  <Slot $w={22}><Lines kind="left" /></Slot>
                  <Slot $w={24}><Lines kind="center" /></Slot>
                  <Slot $w={22}><Lines kind="right" /></Slot>
                  <Slot $w={28}><MergeIcon /></Slot>
                  <Slot $w={1}><Arrow /></Slot>
                </Row>
                <Row>
                  <Slot $w={22}><IndentIcon out /></Slot>
                  <Slot $w={23}><IndentIcon /></Slot>
                  <Divider $w={8} />
                  <Slot $w={24}><OrientIcon /></Slot>
                  <Slot $w={3}><Arrow /></Slot>
                </Row>
              </Stack>
            </GroupBody>
            <GroupLabel $pl={20}><Text>Alignment</Text><Launcher><LaunchIcon /></Launcher></GroupLabel>
          </Group>

          <Group $w={89}>
            <GroupBody>
              <Stack $pl={5}>
                <Row><Combo $w={80}><Text $ls={-0.2}>General</Text><Arrow /></Combo></Row>
                <Row>
                  <Slot $w={24}><CurrencyIcon /></Slot>
                  <Slot $w={7}><Arrow /></Slot>
                  <Slot $w={28}><Percent>%</Percent></Slot>
                  <Slot $w={20}><Comma $size={18}>,</Comma></Slot>
                </Row>
                <Row>
                  <Slot $w={24}><DecimalIcon inc /></Slot>
                  <Slot $w={20}><DecimalIcon /></Slot>
                </Row>
              </Stack>
            </GroupBody>
            <GroupLabel $pl={14}><Text $ls={-0.2}>Number</Text><Launcher><LaunchIcon /></Launcher></GroupLabel>
          </Group>

          <Group $w={165}>
            <GroupBody>
              <Stack $pl={8}>
                <Command><CondIcon /><CommandText>Conditional Formatting</CommandText><Arrow /></Command>
                <Command><TableIcon /><CommandText $ls={-0.3}>Format as Table</CommandText><Arrow /></Command>
                <Command><StylesIcon /><CommandText $ls={-0.2}>Cell Styles</CommandText><Arrow /></Command>
              </Stack>
            </GroupBody>
            <GroupLabel $pl={68}><Text $ls={-0.2}>Styles</Text></GroupLabel>
          </Group>

          <Group $w={80}>
            <GroupBody>
              <Stack $pl={8}>
                <Command><InsertIcon /><CommandText $ls={-0.3}>Insert</CommandText><Arrow /></Command>
                <Command><DeleteIcon /><CommandText $ls={-0.2}>Delete</CommandText><Arrow /></Command>
                <Command><FormatIcon /><CommandText $ls={-0.3}>Format</CommandText><Arrow /></Command>
              </Stack>
            </GroupBody>
            <GroupLabel $pl={28}><Text $ls={-0.2}>Cells</Text></GroupLabel>
          </Group>

          <Group $w={127}>
            <GroupBody>
              <Stack $pl={6}>
                <Row><Slot $w={20}><Sigma>Σ</Sigma></Slot><Slot $w={10}><Arrow /></Slot></Row>
                <Row><Slot $w={20}><FillDownIcon /></Slot><Slot $w={8}><Arrow /></Slot></Row>
                <Row><Slot $w={20}><EraserIcon /></Slot><Slot $w={8}><Arrow /></Slot></Row>
              </Stack>
              <BigButton $w={42}>
                <BigIcon><SortIcon /></BigIcon>
                <BigLine><Text $ls={-0.1}>Sort &amp;</Text></BigLine>
                <BigLine><Text $ls={-0.2}>Filter</Text><Arrow /></BigLine>
              </BigButton>
              <BigButton $w={42}>
                <BigIcon><FindIcon /></BigIcon>
                <BigLine><Text $ls={0}>Find &amp;</Text></BigLine>
                <BigLine><Text $ls={-0.2}>Select</Text><Arrow /></BigLine>
              </BigButton>
            </GroupBody>
            <GroupLabel $pl={45}><Text $ls={0.1}>Editing</Text></GroupLabel>
          </Group>
        </Ribbon>

        <FormulaBar>
          <NameBox><Text $ls={-0.3}>I17</Text><NameArrow><Arrow w={7} c="#222" /></NameArrow></NameBox>
          <FxArea><Knob /><Fx>f<small>x</small></Fx></FxArea>
          <FormulaInput />
          <Expand>
            <svg width="8" height="6" viewBox="0 0 8 6"><path d="M1 1l3 3 3-3" fill="none" stroke="#4a4d54" strokeWidth="2" /></svg>
          </Expand>
        </FormulaBar>

        <Main>
          <Sheet>
            <HeaderRow>
              <Corner />
              {COLS.map(([n, w]) => (
                <ColHead key={n} $w={w} $sel={n === "I"}>{n}</ColHead>
              ))}
            </HeaderRow>
            {ROWS.map((r) => (
              <GridRow key={r}>
                <RowHead $sel={r === 17}>{r}</RowHead>
                {COLS.map(([n, w]) => <Cell key={n} $w={w} />)}
              </GridRow>
            ))}
            <ChartObject><Chart /></ChartObject>
            <Selection />
            <Pointer><CrossIcon /></Pointer>
          </Sheet>
          <VScroll>
            <VSplit />
            <VArrowBox $h={94} $pt={6}><svg width="9" height="5" viewBox="0 0 9 5"><path d="M0 5h9L4.500 0z" fill="#44474e" /></svg></VArrowBox>
            <VThumb><svg width="8" height="8" viewBox="0 0 8 8"><path d="M0 .5h8M0 2.500h8M0 4.500h8M0 6.500h8" stroke="#7c7f86" /></svg></VThumb>
            <VArrowBox $h={40} $pt={31}><svg width="9" height="5" viewBox="0 0 9 5"><path d="M0 0h9L4.500 5z" fill="#44474e" /></svg></VArrowBox>
          </VScroll>
        </Main>

        <BottomBar>
          <NavButtons>
            <Tri d="M1 0h1v8H1zM7 0v8L3 4z" />
            <Tri d="M6 0v8L2 4z" />
            <Tri d="M1 0v8l4-4z" />
            <Tri d="M0 0v8l4-4zM5 0h1v8H5z" />
          </NavButtons>
          <TabRow>
            <SheetTabsShape />
            <TabLabels>
              <SheetName $w={62} $bold>Sheet1</SheetName>
              <SheetName $w={60}>Sheet2</SheetName>
              <SheetName $w={60}>Sheet3</SheetName>
            </TabLabels>
          </TabRow>
          <HSplit />
          <HArrow $w={17}><svg width="5" height="9" viewBox="0 0 5 9"><path d="M5 0v9L0 4.500z" fill="#44474e" /></svg></HArrow>
          <HThumb><svg width="8" height="7" viewBox="0 0 8 7"><path d="M.5 0v7M2.500 0v7M4.500 0v7M6.500 0v7" stroke="#7c7f86" /></svg></HThumb>
          <Spacer />
          <HArrow $w={17}><svg width="5" height="9" viewBox="0 0 5 9"><path d="M0 0v9l5-4.500z" fill="#44474e" /></svg></HArrow>
          <HSplit />
          <HArrow $w={16} />
        </BottomBar>

        <StatusBar>
          <Text $ls={-0.25}>Ready</Text>
          <HArrow $w={9} />
          <StatusSep />
          <Spacer />
          <StatusSep />
          <Views>
            <ViewButton $active><ViewGrid /></ViewButton>
            <ViewButton><ViewPage /></ViewButton>
            <ViewButton><ViewBreak /></ViewButton>
          </Views>
          <ZoomText>100%</ZoomText>
          <ZoomSlider />
        </StatusBar>
      </Window>
    </>
  );
}
